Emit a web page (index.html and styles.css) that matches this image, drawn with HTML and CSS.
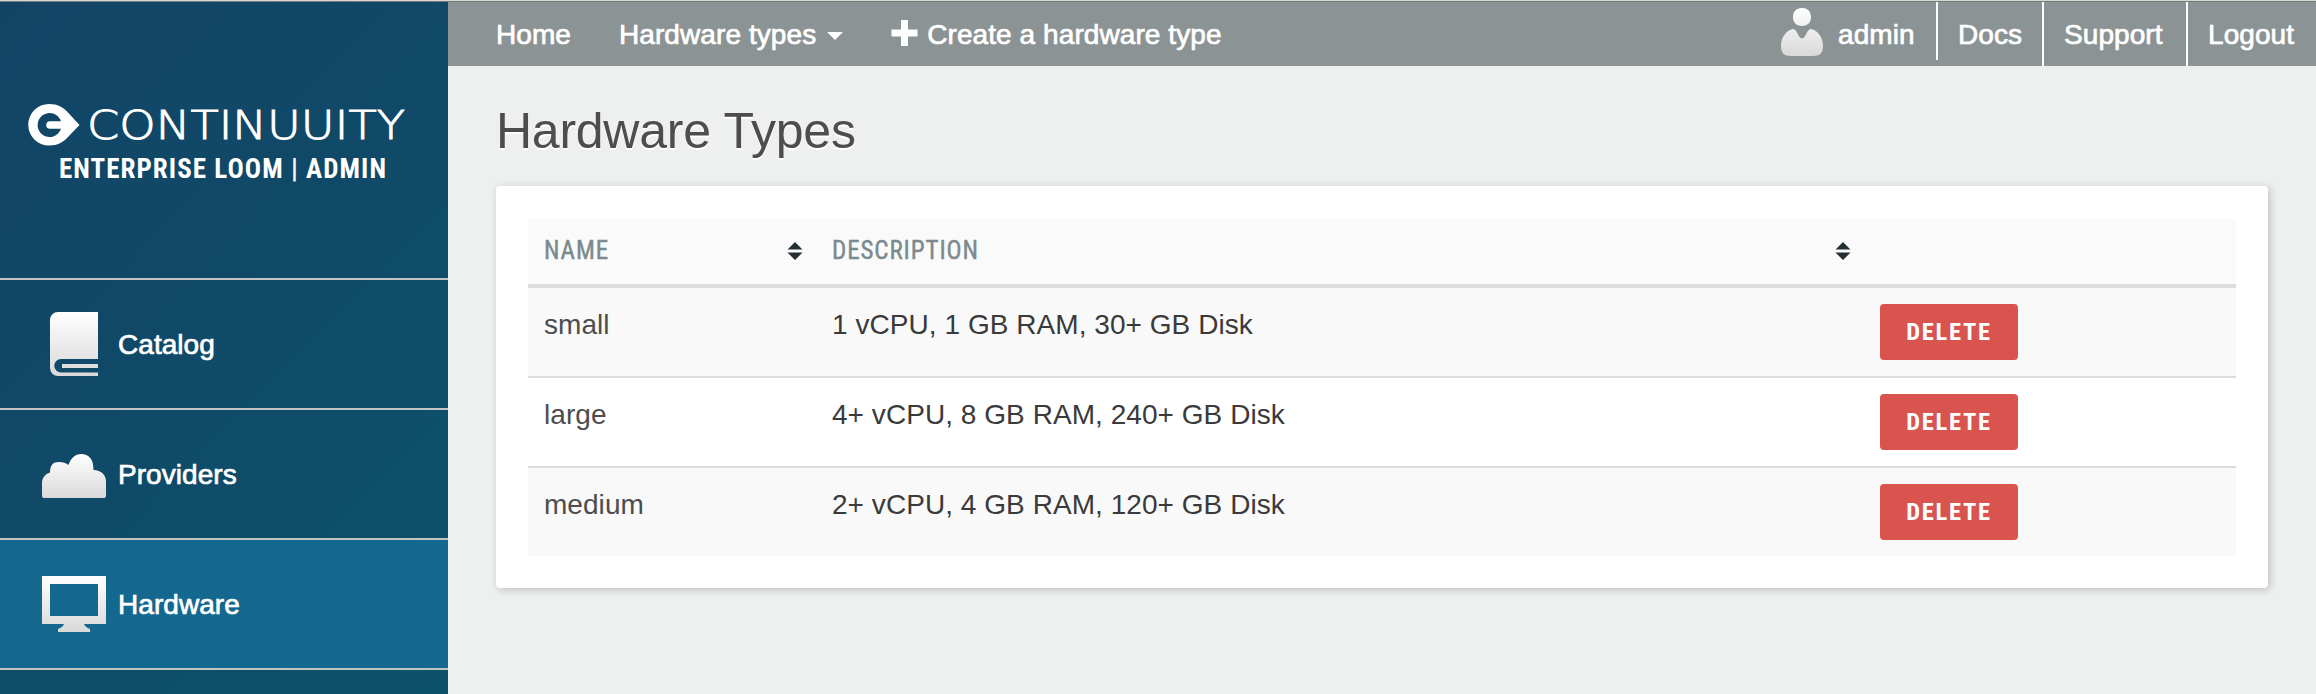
FILE: index.html
```html
<!DOCTYPE html>
<html lang="en">
<head>
<meta charset="utf-8">
<title>Hardware Types</title>
<link rel="stylesheet" href="styles.css">
</head>
<body>
<svg class="defs" width="0" height="0" aria-hidden="true">
  <defs>
    <linearGradient id="shade" x1="0" y1="0" x2="0" y2="1">
      <stop offset="0" stop-color="#fff"/><stop offset="1" stop-color="#d9d9d9"/>
    </linearGradient>
    <symbol id="sort" viewBox="0 0 16 18"><path d="M8 0l7.500 7.500H.5zM.5 10.500h15L8 18z" fill="#253035"/></symbol>
  </defs>
</svg>
<div class="app">
  <aside class="sidebar">
    <div class="brand">
      <svg class="logo" width="448" height="100" viewBox="0 100 448 100">
        <path fill="#fff" fill-rule="evenodd" d="M49 104c9 0 14 3.500 18.500 8L79.500 125 67.500 137.500C63 142 58 145.500 49 145.500a20.750 20.750 0 0 1 0-41.500zM61 121.200A12 12 0 1 0 61 128.800H50a3.800 3.800 0 0 1 0-7.600z"/>
        <text class="wordmark" x="87" y="139" textLength="318" lengthAdjust="spacingAndGlyphs">CONTINUUITY</text>
        <text class="product" x="59" y="178" textLength="327" lengthAdjust="spacing">ENTERPRISE LOOM | ADMIN</text>
      </svg>
    </div>
    <nav class="menu">
      <a class="menu-item"><svg class="menu-icon" width="64" height="64" viewBox="0 0 64 64"><path fill="url(#shade)" d="M56 47H19a6.500 6.500 0 0 0 0 13.500H56V64H16a8 8 0 0 1-8-8V8a8 8 0 0 1 8-8H56zM20 52H56v4H20z"/></svg><span>Catalog</span></a>
      <a class="menu-item"><svg class="menu-icon" width="64" height="64" viewBox="0 0 64 64"><path fill="url(#shade)" d="M2 56a2 2 0 0 1-2-2V41c0-5 3-9 8-10.500C8 23 11 20 17 20q6 0 9.500 3C29 16 33 12 39 12c8 0 12.500 5 12.500 16C59 28 64 33 64 39v15a2 2 0 0 1-2 2z"/></svg><span>Providers</span></a>
      <a class="menu-item active"><svg class="menu-icon" width="64" height="64" viewBox="0 0 64 64"><path fill="url(#shade)" fill-rule="evenodd" d="M0 4H64V52H42q1 3 6 5v3H16v-3q5-2 6-5H0zM8 12V44H56V12z"/></svg><span>Hardware</span></a>
      <a class="menu-item partial"></a>
    </nav>
  </aside>
  <div class="page">
    <header class="topbar">
      <nav class="links">
        <a>Home</a>
        <a class="types">Hardware types<i class="caret"></i></a>
        <a class="create"><svg width="28" height="26" viewBox="0 0 28 26"><path fill="#fff" d="M10 0h7v9.500h9.500v7H17V26h-7v-9.500H.5v-7H10z"/></svg>Create a hardware type</a>
      </nav>
      <div class="account">
        <span class="user"><svg width="42" height="48" viewBox="0 0 42 48"><path fill="url(#shade)" d="M21 0c5 0 9 3 9 9s-4 9-9 9-9-3-9-9 4-9 9-9zM12 21c4.500 0 5 9.500 9 9.500s4.500-9.500 9-9.500c7 1 12 9 12 17 0 7-3 10-10 10H10C3 48 0 45 0 38 0 30 5 22 12 21z"/></svg><span>admin</span></span>
        <a class="docs">Docs</a>
        <a class="support">Support</a>
        <a class="logout">Logout</a>
      </div>
    </header>
    <main class="content">
      <h1>Hardware Types</h1>
      <section class="card">
        <table>
          <colgroup><col class="c-name"><col class="c-desc"><col></colgroup>
          <thead><tr>
            <th><div class="th"><span>Name</span><svg width="16" height="18"><use href="#sort"/></svg></div></th>
            <th><div class="th"><span>Description</span><svg width="16" height="18"><use href="#sort"/></svg></div></th>
            <th></th>
          </tr></thead>
          <tbody>
            <tr><td class="name">small</td><td>1 vCPU, 1 GB RAM, 30+ GB Disk</td><td class="action"><button>Delete</button></td></tr>
            <tr><td class="name">large</td><td>4+ vCPU, 8 GB RAM, 240+ GB Disk</td><td class="action"><button>Delete</button></td></tr>
            <tr><td class="name">medium</td><td>2+ vCPU, 4 GB RAM, 120+ GB Disk</td><td class="action"><button>Delete</button></td></tr>
          </tbody>
        </table>
      </section>
    </main>
  </div>
</div>
</body>
</html>
```
FILE: styles.css
```css
* { box-sizing: border-box; }
body {
  margin: 0;
  height: 694px;
  background: #eef0ef;
  font: 28px/40px "Liberation Sans", Arial, sans-serif;
  letter-spacing: .05px;
  color: #3a3a3a;
}
.defs { position: absolute; }
.app {
  display: flex;
  height: 694px;
  border-top: 1px solid #d5d7d3;
}
.sidebar {
  width: 448px;
  flex: none;
  border-top: 1px solid #7b7d7a;
  background: linear-gradient(135deg, #124466 0%, #114867 35%, #0e4d69 65%, #0d526c 100%);
}
.brand { height: 276px; padding-top: 98px; }
.logo { display: block; }
.wordmark { font: 200 38.500px "DejaVu Sans", sans-serif; fill: #fff; stroke: #fff; stroke-width: .9px; }
.product { font: bold 27px "Liberation Sans Narrow", "Roboto Condensed", sans-serif; fill: #fff; }
.menu-item {
  display: flex;
  align-items: center;
  height: 130px;
  padding-left: 42px;
  border-top: 2px solid #c4c4c4;
  color: #fff;
  -webkit-text-stroke: .7px #fff;
}
.menu-item span { padding-top: 2px; }
.menu-icon { margin-right: 12px; }
.menu-item.active { background: #14678e; }
.menu-item.partial { height: 26px; }
.page { flex: 1; }
.topbar {
  display: flex;
  justify-content: space-between;
  height: 65px;
  border-top: 1px solid #7b7d7a;
  background: #8c9394;
  color: #fff;
  line-height: 65px;
  letter-spacing: .08px;
  -webkit-text-stroke: .7px #fff;
}
.links, .account, .user, .create, .types { display: flex; }
.links { padding-left: 48px; }
.types { margin-left: 48px; }
.caret {
  margin: 30px 0 0 11px;
  width: 0;
  height: 0;
  border: 8px solid transparent;
  border-top-color: #fff;
  border-bottom: 0;
}
.create { margin-left: 48px; }
.create svg { margin: 18px 8px 0 0; }
.account { height: 64px; }
.user { width: 157px; height: 58px; border-right: 2px solid #fff; }
.user svg { margin: 6px 15px 0 0; }
.docs { width: 106px; padding-left: 20px; border-right: 2px solid #fff; }
.support { width: 144px; padding-left: 20px; border-right: 2px solid #fff; }
.logout { width: 128px; padding-left: 20px; }
.content { padding: 35px 48px 0; }
h1 {
  margin: 0 0 25px;
  font-size: 50px;
  font-weight: 400;
  line-height: 60px;
  letter-spacing: -.25px;
  color: #4d4d4d;
  text-shadow: 0 2px 0 #fff;
}
.card {
  height: 402px;
  padding: 32px;
  border-radius: 4px;
  background: #fff;
  box-shadow: 2px 2px 8px rgba(0, 0, 0, .2);
}
table { width: 100%; table-layout: fixed; border-collapse: separate; border-spacing: 0; }
.c-name { width: 288px; }
.c-desc { width: 1048px; }
th {
  height: 70px;
  padding: 0 13px 0 16px;
  border-bottom: 4px solid #ddd;
  background: #fafafa;
  text-align: left;
}
.th {
  display: flex;
  align-items: center;
  justify-content: space-between;
  font: 25px/30px "Liberation Sans Narrow", "Roboto Condensed", sans-serif;
  letter-spacing: .9px;
  text-transform: uppercase;
  color: #7b8a8e;
  -webkit-text-stroke: .4px #7b8a8e;
}
td { height: 88px; padding: 17px 16px 15px; vertical-align: top; }
td.action { padding: 16px; }
tbody tr + tr td { height: 90px; border-top: 2px solid #ddd; }
tbody tr:nth-child(odd) td { background: #f9f9f9; }
.name { color: #4d4d4d; }
button {
  display: block;
  width: 138px;
  height: 56px;
  padding: 0;
  border: 0;
  border-radius: 4px;
  background: #d9534f;
  color: #fff;
  font: bold 24.500px/56px "Liberation Sans Narrow", "Roboto Condensed", sans-serif;
  letter-spacing: 1.700px;
  text-transform: uppercase;
}
```
